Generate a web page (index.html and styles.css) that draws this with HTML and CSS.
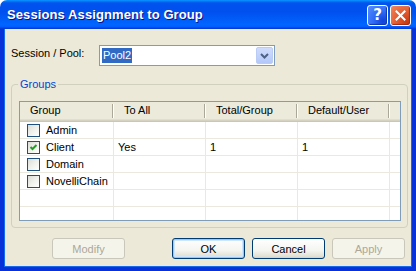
FILE: index.html
```html
<!DOCTYPE html>
<html lang="en">
<head>
  <meta charset="UTF-8">
  <title>Sessions Assignment to Group</title>
  <link rel="stylesheet" href="styles.css">
</head>
<body>

  <div class="window">
    <div class="titlebar">
      <span class="title">Sessions Assignment to Group</span>
      <div class="title-buttons">
        <button class="tb help">?</button>
        <button class="tb close">
          <svg width="11" height="11" viewBox="0 0 11 11">
            <path d="M1.5 1.5 L9.5 9.5 M9.5 1.5 L1.5 9.5" stroke="#fff" stroke-width="2" stroke-linecap="square"/>
          </svg>
        </button>
      </div>
    </div>

    <div class="client">
      <div class="pool-row">
        <label class="pool-label" for="pool">Session / Pool:</label>
        <div class="combo" id="pool">
          <span class="combo-text"><span class="selected">Pool2</span></span>
          <span class="combo-btn">
            <svg width="9" height="6" viewBox="0 0 9 6">
              <path d="M1 1 L4.5 4.5 L8 1" fill="none" stroke="#4d6185" stroke-width="2"/>
            </svg>
          </span>
        </div>
      </div>

      <fieldset class="groupbox">
        <legend>Groups</legend>
        <div class="listview">
          <div class="lv-header">
            <div class="hcell">Group</div>
            <div class="hcell">To All</div>
            <div class="hcell">Total/Group</div>
            <div class="hcell">Default/User</div>
            <div class="hcell last"></div>
          </div>
          <div class="lv-row">
            <div class="cell first"><span class="check"></span>Admin</div>
            <div class="cell"></div><div class="cell"></div><div class="cell"></div><div class="cell last"></div>
          </div>
          <div class="lv-row">
            <div class="cell first"><span class="check checked">
              <svg width="9" height="9" viewBox="0 0 9 9">
                <path d="M1.5 4 L3.5 6 L7.5 2" fill="none" stroke="#21a121" stroke-width="2"/>
              </svg></span>Client</div>
            <div class="cell">Yes</div><div class="cell">1</div><div class="cell">1</div><div class="cell last"></div>
          </div>
          <div class="lv-row">
            <div class="cell first"><span class="check"></span>Domain</div>
            <div class="cell"></div><div class="cell"></div><div class="cell"></div><div class="cell last"></div>
          </div>
          <div class="lv-row">
            <div class="cell first"><span class="check"></span>NovelliChain</div>
            <div class="cell"></div><div class="cell"></div><div class="cell"></div><div class="cell last"></div>
          </div>
          <div class="lv-row">
            <div class="cell first"></div>
            <div class="cell"></div><div class="cell"></div><div class="cell"></div><div class="cell last"></div>
          </div>
          <div class="lv-row">
            <div class="cell first"></div>
            <div class="cell"></div><div class="cell"></div><div class="cell"></div><div class="cell last"></div>
          </div>
          <div class="lv-row">
            <div class="cell first"></div>
            <div class="cell"></div><div class="cell"></div><div class="cell"></div><div class="cell last"></div>
          </div>
        </div>
      </fieldset>

      <div class="buttons">
        <button class="btn modify" disabled>Modify</button>
        <button class="btn default">OK</button>
        <button class="btn">Cancel</button>
        <button class="btn" disabled>Apply</button>
      </div>
    </div>
  </div>

</body>
</html>
```

FILE: styles.css
```css
body {
  margin: 0;
  background: #fff;
  font-family: "Liberation Sans", Arial, sans-serif;
  font-size: 11px;
  color: #000;
}
.window {
  width: 416px;
  height: 271px;
  display: flex;
  flex-direction: column;
  overflow: hidden;
}
.titlebar {
  height: 29px;
  flex: none;
  display: flex;
  align-items: center;
  justify-content: space-between;
  padding: 0 5px 0 7px;
  border-radius: 7px 7px 0 0;
  background: linear-gradient(to bottom, #0997ff 0%, #0053ee 10%, #0050ee 40%, #0066ff 86%, #005bff 93%, #003dd7 97%, #003dd7 100%);
}
.title {
  color: #fff;
  font-weight: bold;
  font-size: 13px;
  text-shadow: 1px 1px #0f1089;
  letter-spacing: 0.1px;
}
.title-buttons {
  display: flex;
  gap: 2px;
  margin-top: 1px;
}
.tb {
  width: 21px;
  height: 21px;
  padding: 0;
  border: 1px solid #fff;
  border-radius: 3px;
  display: flex;
  align-items: center;
  justify-content: center;
  color: #fff;
  font-family: "DejaVu Sans", sans-serif;
  font-weight: bold;
  font-size: 15px;
}
.help {
  background: radial-gradient(circle at 80% 80%, #1042d8 0%, #2f6bf6 45%, #5a8ffa 100%);
  box-shadow: inset -1px -1px 1px #1237a6;
}
.close {
  background: radial-gradient(circle at 85% 85%, #c83a12 0%, #e25a2f 45%, #f0895f 100%);
  box-shadow: inset -1px -1px 1px #a42c0c;
}
.client {
  flex: 1;
  background: #ece9d8;
  border: 4px solid #0831d9;
  border-top: none;
  box-shadow: inset 1px 0 #166aee, inset -1px 0 #166aee, inset 0 -1px #166aee;
  padding: 16px 8px 0 7px;
}
.pool-row {
  display: flex;
  align-items: flex-start;
}
.pool-label {
  width: 88px;
  padding-top: 2px;
}
.combo {
  width: 176px;
  height: 21px;
  box-sizing: border-box;
  border: 1px solid #7f9db9;
  background: #fff;
  display: flex;
  align-items: center;
  padding: 1px 1px 1px 2px;
}
.combo-text {
  flex: 1;
}
.selected {
  background: #316ac5;
  color: #fff;
  padding: 1px 1px;
  line-height: 13px;
  display: inline-block;
}
.combo-btn {
  width: 17px;
  height: 17px;
  box-sizing: border-box;
  border: 1px solid #bacbf5;
  border-radius: 2px;
  background: linear-gradient(to bottom, #d0dcfc, #b3c8fa);
  display: flex;
  align-items: center;
  justify-content: center;
}
.groupbox {
  margin: 12px 1px 0 0;
  padding: 10px 6px 6px 7px;
  border: 1px solid #d0d0bf;
  border-radius: 4px;
}
.groupbox legend {
  color: #0046d5;
  padding: 0 2px;
  line-height: 13px;
  margin-left: -1px;
}
.listview {
  height: 120px;
  box-sizing: border-box;
  border: 1px solid #7f9db9;
  background: #fff;
  overflow: hidden;
}
.lv-header,
.lv-row {
  display: grid;
  grid-template-columns: 94px 92px 92px 92px 1fr;
}
.lv-header {
  height: 20px;
  background: #ebeadb;
  box-shadow: inset 0 -1px #cbc7b8, inset 0 -2px #d6d2c2, inset 0 -3px #e2decd;
}
.hcell {
  position: relative;
  padding-left: 10px;
  line-height: 17px;
}
.hcell::after {
  content: "";
  position: absolute;
  right: 1px;
  top: 2px;
  height: 14px;
  width: 1px;
  background: #aca899;
  box-shadow: 1px 0 #fff;
}
.hcell.last::after {
  display: none;
}
.lv-row {
  height: 17px;
}
.cell {
  border-right: 1px solid #ebe9de;
  border-bottom: 1px solid #ebe9de;
  padding-left: 4px;
  line-height: 16px;
  display: flex;
  align-items: center;
}
.cell.first {
  padding-left: 7px;
}
.cell.last {
  border-right: none;
}
.check {
  width: 13px;
  height: 13px;
  box-sizing: border-box;
  border: 1px solid #1c5180;
  background: linear-gradient(135deg, #dcdcd7 0%, #f0f0ec 50%, #fff 100%);
  margin-right: 6px;
  display: flex;
  align-items: center;
  justify-content: center;
}
.buttons {
  display: flex;
  gap: 7px;
  justify-content: flex-end;
  margin: 10px -1px 0 0;
}
.btn {
  width: 73px;
  height: 21px;
  box-sizing: border-box;
  padding: 0;
  border: 1px solid #003c74;
  border-radius: 3px;
  background: linear-gradient(to bottom, #fff 0%, #f4f4f0 60%, #e3e1d6 90%, #d6d0c5 100%);
  font-family: "Liberation Sans", Arial, sans-serif;
  font-size: 11px;
  color: #000;
}
.btn.default {
  box-shadow: inset 0 0 0 1px #9fc4f5, inset 0 0 0 2px #cee7ff;
}
.btn:disabled {
  border-color: #c9c7ba;
  background: #f5f4ea;
  color: #aca899;
}
.btn.modify {
  margin-right: 40px;
}
```
